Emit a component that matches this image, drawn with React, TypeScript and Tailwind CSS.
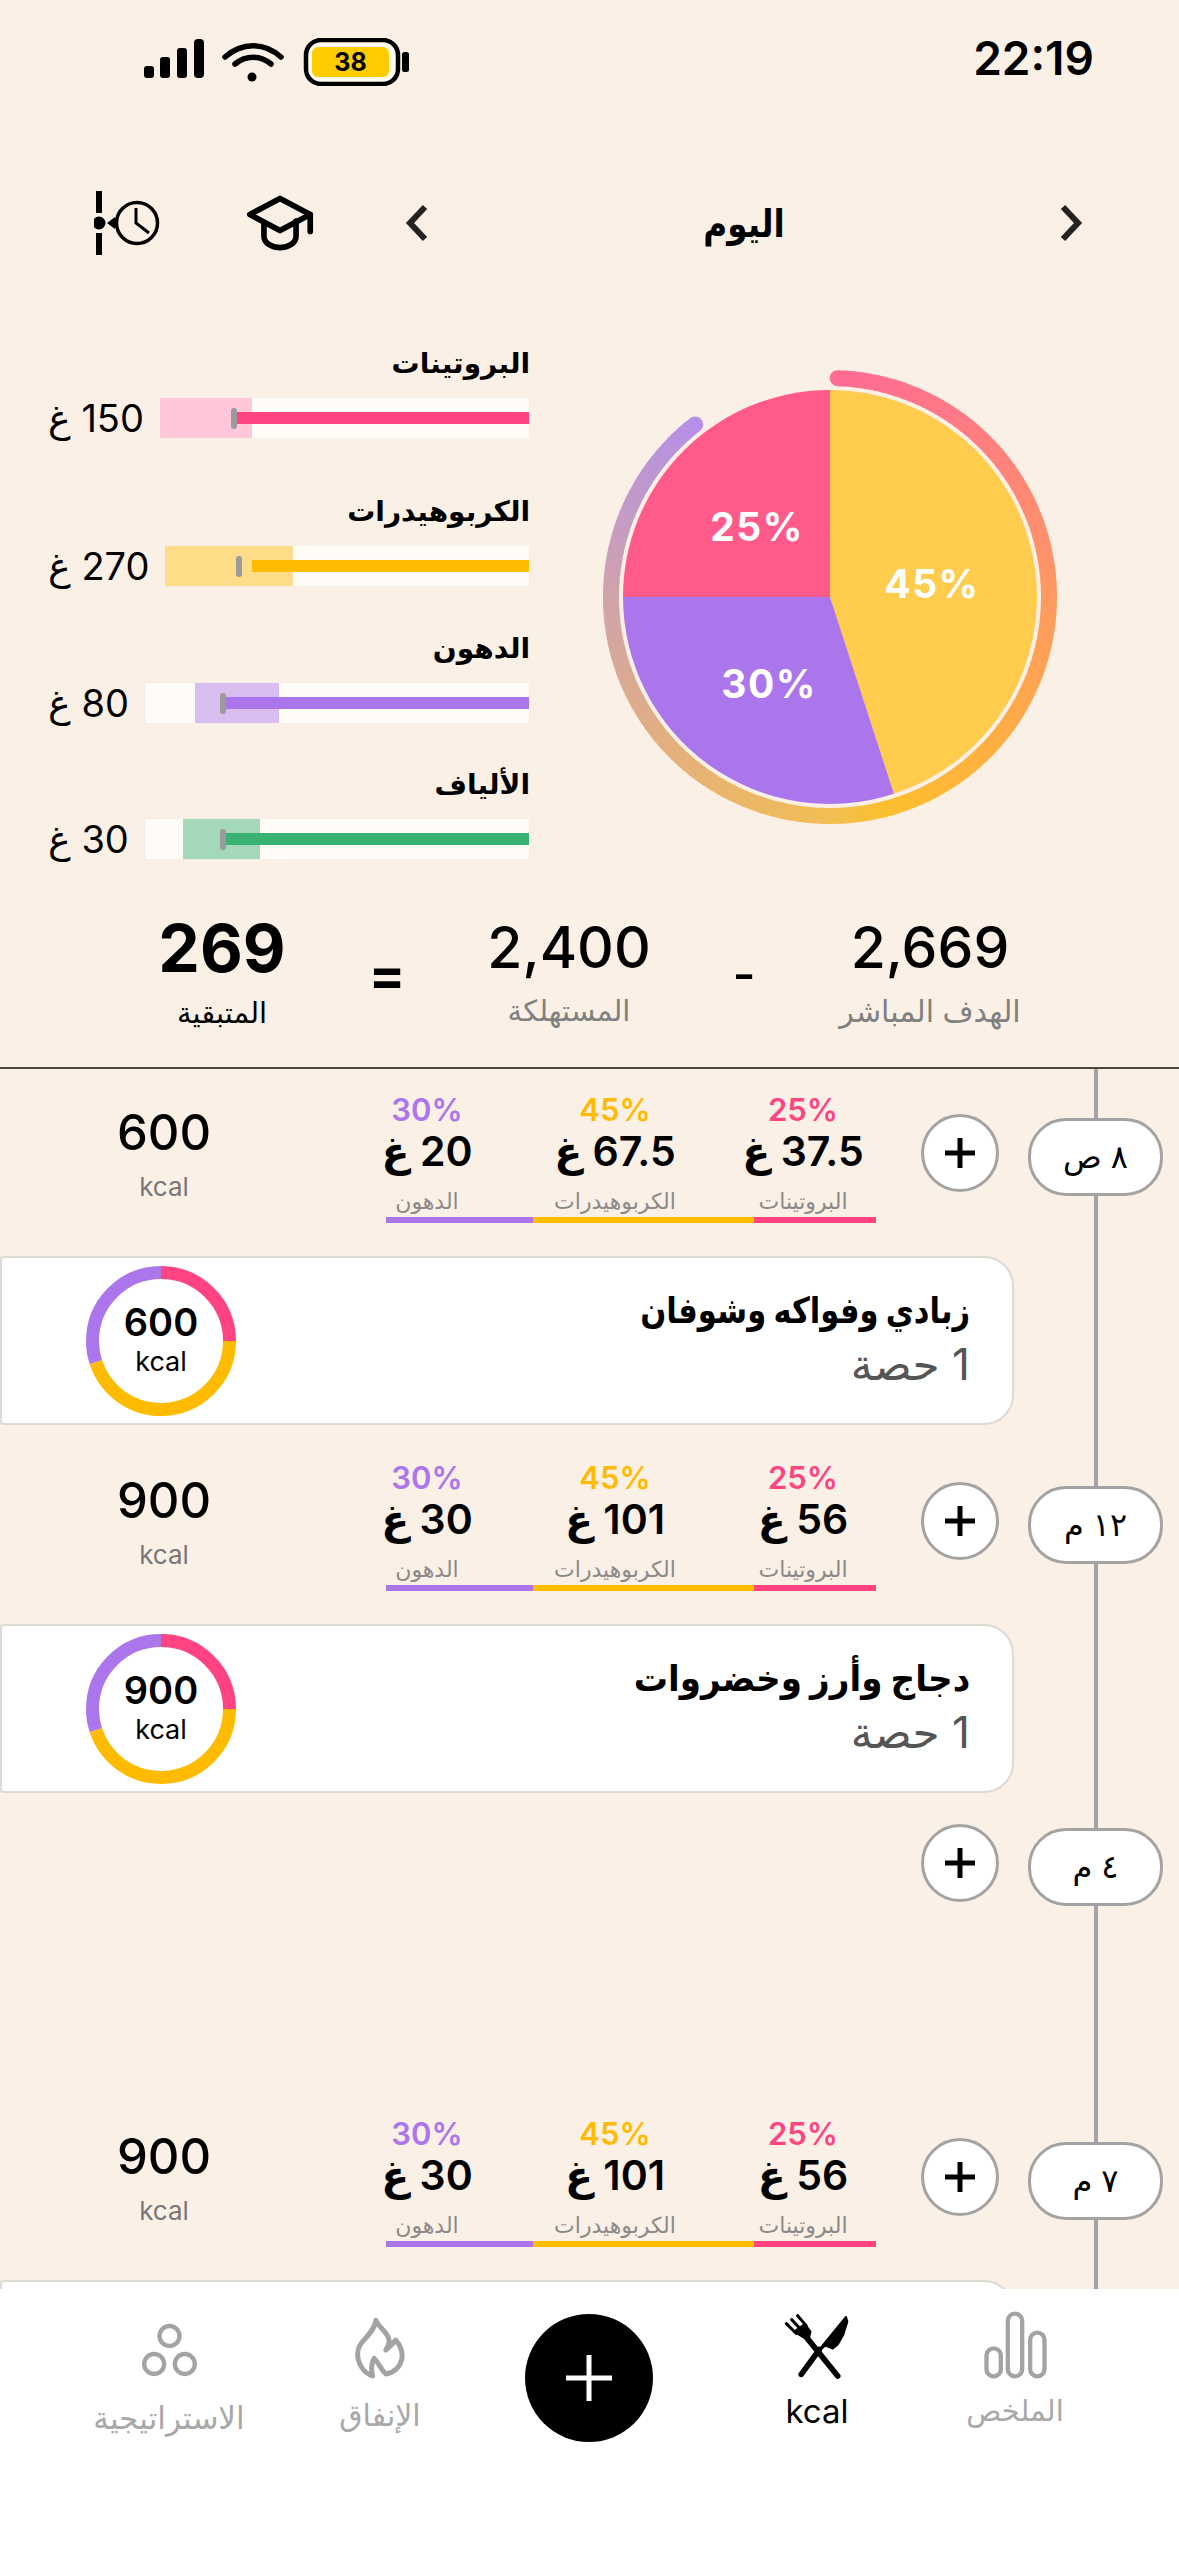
const PINK = "#FF4481";
const YELLOW = "#FFBB00";
const PURPLE = "#AB76EB";

const targets = [
  { name: "البروتينات", value: "150 غ", band: "#FFC7D8", fill: PINK, mt: "", bandLeft: 0, bandWidth: 92, fillLeft: 75, tick: 71 },
  { name: "الكربوهيدرات", value: "270 غ", band: "#FFDD88", fill: YELLOW, mt: "mt-[52px]", bandLeft: 0, bandWidth: 128, fillLeft: 87, tick: 71 },
  { name: "الدهون", value: "80 غ", band: "#D8BDF0", fill: PURPLE, mt: "mt-[41px]", bandLeft: 50, bandWidth: 84, fillLeft: 78, tick: 75 },
  { name: "الألياف", value: "30 غ", band: "#A3D9B9", fill: "#38B373", mt: "mt-[40px]", bandLeft: 38, bandWidth: 77, fillLeft: 78, tick: 75 },
];

// colours of the ring, clockwise from the top of the pie
const ringStops: [number, number[]][] = [
  [2, [255, 107, 147]],
  [45, [255, 127, 128]],
  [90, [255, 154, 96]],
  [135, [255, 176, 64]],
  [165, [252, 192, 46]],
  [180, [242, 190, 85]],
  [225, [228, 176, 124]],
  [270, [208, 163, 172]],
  [300, [191, 152, 208]],
  [322, [183, 143, 232]],
];

const ringColor = (angle: number) => {
  for (let i = 0; i < ringStops.length - 1; i++) {
    const [a, ca] = ringStops[i];
    const [b, cb] = ringStops[i + 1];
    if (angle <= b) {
      const t = (angle - a) / (b - a);
      return `rgb(${ca.map((c, k) => Math.round(c + (cb[k] - c) * t)).join(",")})`;
    }
  }
  return "rgb(183,143,232)";
};

const polar = (r: number, angle: number) => {
  const a = (angle * Math.PI) / 180;
  return [240 + r * Math.sin(a), 240 - r * Math.cos(a)];
};

const slice = (from: number, to: number) => {
  const [x1, y1] = polar(207, from);
  const [x2, y2] = polar(207, to);
  return `M240 240L${x1} ${y1}A207 207 0 0 1 ${x2} ${y2}Z`;
};

const MacroChart = () => {
  const segments = [];
  for (let a = 2; a < 322; a += 2) {
    const [x1, y1] = polar(219, a);
    const [x2, y2] = polar(219, a + 2.4);
    segments.push(
      <path key={a} d={`M${x1} ${y1}A219 219 0 0 1 ${x2} ${y2}`} stroke={ringColor(a)} strokeWidth="16" fill="none" />
    );
  }
  const [sx, sy] = polar(219, 2);
  const [ex, ey] = polar(219, 322);
  return (
    <svg width="480" height="480" viewBox="0 0 480 480" className="mt-[14px] shrink-0">
      {segments}
      <circle cx={sx} cy={sy} r="8" fill={ringColor(2)} />
      <circle cx={ex} cy={ey} r="8" fill={ringColor(322)} />
      <path d={slice(0, 162)} fill="#FFCC4D" />
      <path d={slice(162, 270)} fill="#AB76EB" />
      <path d={slice(270, 360)} fill="#FF5A8A" />
      <g fill="#fff" fontSize="39" fontWeight="700" textAnchor="middle" letterSpacing="1.5">
        <text x="342" y="241">45%</text>
        <text x="179" y="341">30%</text>
        <text x="167" y="184">25%</text>
      </g>
    </svg>
  );
};

const TargetRow = ({ t }: { t: (typeof targets)[number] }) => (
  <div className={t.mt}>
    <div className="h-[40px] text-[28px] leading-[40px] font-bold text-black">{t.name}</div>
    <div className="mt-[14px] flex items-center gap-[15px]">
      <div className="relative h-[42px] flex-1 border border-[#F3EEE8] bg-[#FFFCF7]">
        <div className="absolute inset-y-0" style={{ left: t.bandLeft, width: t.bandWidth, backgroundColor: t.band }} />
        <div className="absolute right-0 top-[14px] h-[12px]" style={{ left: t.fillLeft, backgroundColor: t.fill }} />
        <div className="absolute top-[10px] h-[21px] w-[6px] rounded-full bg-[#9B9B9B]" style={{ left: t.tick }} />
      </div>
      <div className="text-[38px] leading-[42px] text-black">{t.value}</div>
    </div>
  </div>
);

const Donut = ({ kcal }: { kcal: string }) => (
  <svg width="150" height="150" viewBox="0 0 150 150">
    <g fill="none" strokeWidth="13" transform="rotate(-90 75 75)">
      <circle cx="75" cy="75" r="68.5" pathLength="100" stroke={PINK} strokeDasharray="25 75" />
      <circle cx="75" cy="75" r="68.5" pathLength="100" stroke={YELLOW} strokeDasharray="45 55" strokeDashoffset="-25" />
      <circle cx="75" cy="75" r="68.5" pathLength="100" stroke={PURPLE} strokeDasharray="30 70" strokeDashoffset="-70" />
    </g>
    <text x="75" y="70" textAnchor="middle" fontSize="38" fontWeight="600" fill="#000">{kcal}</text>
    <text x="75" y="105" textAnchor="middle" fontSize="27" fill="#000">kcal</text>
  </svg>
);

const MealCard = ({ name, kcal, nameClass }: { name?: string; kcal: string; nameClass?: string }) => (
  <div className="mr-auto mt-[33px] flex h-[169px] w-[1014px] shrink-0 items-center justify-between rounded-l-[4px] rounded-r-[30px] border-2 border-[#DED9D2] bg-white pl-[84px] pr-[42px]">
    <div className="pb-[8px]">
      {name && <div className={`origin-right text-[36px] leading-[50px] font-bold text-black ${nameClass}`}>{name}</div>}
      {name && <div className="mt-[4px] text-[44px] leading-[50px] text-[#555555]">1 حصة</div>}
    </div>
    <Donut kcal={kcal} />
  </div>
);

const TimeSlot = ({ time }: { time: string }) => (
  <>
    <div className="relative z-10 mt-[26px] flex h-[78px] w-[135px] shrink-0 items-center justify-center rounded-[38px] border-[3px] border-[#A3A3A3] bg-white text-[32px] text-black">
      {time}
    </div>
    <button
      type="button"
      className="relative z-10 ml-[24px] mr-[29px] mt-[22px] flex h-[78px] w-[78px] shrink-0 items-center justify-center rounded-full border-[3px] border-[#A3A3A3] bg-white"
    >
      <svg width="34" height="34" viewBox="0 0 34 34">
        <path d="M17 2v30M2 17h30" stroke="#000" strokeWidth="5" />
      </svg>
    </button>
  </>
);

const MacroCol = ({ pct, value, label, color }: { pct: string; value: string; label: string; color: string }) => (
  <div className="flex w-[188px] flex-col items-center">
    <div className="text-[31px] leading-[36px] font-semibold" style={{ color }}>{pct}</div>
    <div className="-mt-[1px] text-[41px] leading-[48px] font-semibold text-black">{value}</div>
    <div className="mt-[13px] text-[22px] leading-[26px] text-[#8A8A8A]">{label}</div>
  </div>
);

const MealRow = ({ time, protein, carbs, fats, kcal, mt }: { time: string; protein: string; carbs: string; fats: string; kcal: string; mt: string }) => (
  <div className={`flex h-[131px] shrink-0 pr-[16px] ${mt}`}>
    <TimeSlot time={time} />
    <div className="w-[564px] shrink-0">
      <div className="flex">
        <MacroCol pct="25%" value={protein} label="البروتينات" color={PINK} />
        <MacroCol pct="45%" value={carbs} label="الكربوهيدرات" color={YELLOW} />
        <MacroCol pct="30%" value={fats} label="الدهون" color={PURPLE} />
      </div>
      <div className="ml-[53px] mr-[21px] mt-[3px] flex h-[6px]">
        <div className="w-[122px] bg-[#FF4481]" />
        <div className="w-[221px] bg-[#FFBB00]" />
        <div className="flex-1 bg-[#AB76EB]" />
      </div>
    </div>
    <div className="flex w-[333px] shrink-0 flex-col items-center pr-[5px] pt-[13px]">
      <div className="text-[49px] leading-[56px] font-medium text-black">{kcal}</div>
      <div className="mt-[11px] text-[26px] leading-[30px] text-[#777777]">kcal</div>
    </div>
  </div>
);

const HistoryIcon = () => (
  <svg width="66" height="65" viewBox="0 0 66 65" fill="none">
    <path d="M5 1v22M5 43v22" stroke="#000" strokeWidth="6" />
    <circle cx="5" cy="33" r="6.5" fill="#000" />
    <path d="M13 33l8-6v12z" fill="#000" />
    <circle cx="43" cy="33" r="20.5" stroke="#000" strokeWidth="3.5" />
    <path d="M42 18v15l13 10" stroke="#000" strokeWidth="3" />
  </svg>
);

const CapIcon = () => (
  <svg width="68" height="58" viewBox="0 0 72 60" fill="none" stroke="#000" strokeWidth="6" strokeLinecap="round" strokeLinejoin="round">
    <path d="M36 4L4 21l32 17 32-17z" />
    <path d="M68 21v18" />
    <path d="M19 30v14c0 7 8 12 17 12s17-5 17-12V28" />
  </svg>
);

const Chevron = ({ d }: { d: string }) => (
  <svg width="24" height="38" viewBox="0 0 24 38" fill="none" className="shrink-0">
    <path d={d} stroke="#222" strokeWidth="6" />
  </svg>
);

const ForkKnifeIcon = () => (
  <svg width="68" height="68" viewBox="40 40 205 205" fill="#000" stroke="#000" strokeLinecap="round" strokeLinejoin="round">
    <path d="M95 225L150 150" strokeWidth="17" fill="none" />
    <path d="M143 158L230 52 234 66 222 105 205 135 190 147 168 138z" strokeWidth="6" />
    <path d="M205 230L112 115" strokeWidth="17" fill="none" />
    <path d="M50 72L80 102M66 60L94 90M84 48L110 78" strokeWidth="9" fill="none" />
    <path d="M72 96L106 72 124 96 118 120 100 114z" strokeWidth="4" />
  </svg>
);

const navItems = [
  {
    label: "الملخص",
    active: false,
    box: "pt-[22px]",
    gap: "mt-[14px] text-[29px]",
    icon: (
      <svg width="63" height="68" viewBox="640 30 188 204" fill="none" stroke="#A3A3A3" strokeWidth="13">
        <rect x="647" y="142" width="43" height="84" rx="21.5" />
        <rect x="711" y="38" width="43" height="188" rx="21.5" />
        <rect x="778" y="95" width="43" height="131" rx="21.5" />
      </svg>
    ),
  },
  {
    label: "kcal",
    active: true,
    box: "pt-[24px]",
    gap: "mt-[12px] text-[33px]",
    icon: <ForkKnifeIcon />,
  },
  { plus: true, label: "", active: false, box: "", gap: "", icon: null },
  {
    label: "الإنفاق",
    active: false,
    box: "pt-[28px]",
    gap: "mt-[17px] text-[30px]",
    icon: (
      <svg width="52" height="63" viewBox="670 50 155 190" fill="none" stroke="#A3A3A3" strokeWidth="15" strokeLinejoin="round">
        <path d="M735 60c8 20 38 38 40 60 1 12-4 20-10 30 10-8 20-18 30-30 14 16 22 36 18 58-6 24-24 40-47 44-16-12-18-30-36-47-8 12-10 30-5 53-28-10-45-38-45-68 0-40 50-55 55-100z" />
      </svg>
    ),
  },
  {
    label: "الاستراتيجية",
    active: false,
    box: "pt-[33px]",
    gap: "mt-[22px] text-[31px]",
    icon: (
      <svg width="59" height="56" viewBox="30 58 176 168" fill="none" stroke="#A3A3A3" strokeWidth="13">
        <circle cx="118" cy="100" r="30" />
        <circle cx="72" cy="184" r="30" />
        <circle cx="164" cy="184" r="30" />
      </svg>
    ),
  },
];

const BottomNav = () => (
  <div className="absolute inset-x-0 bottom-0 z-20 h-[267px] bg-white">
    <div className="grid grid-cols-[166px_230px_226px_192px_230px] pr-[81px]">
      {navItems.map((item) =>
        item.plus ? (
          <div key="add" className="flex justify-center pt-[25px]">
            <button type="button" className="flex h-[128px] w-[128px] items-center justify-center rounded-full bg-black">
              <svg width="46" height="46" viewBox="0 0 46 46">
                <path d="M23 0v46M0 23h46" stroke="#fff" strokeWidth="5" />
              </svg>
            </button>
          </div>
        ) : (
          <div key={item.label} className={`flex flex-col items-center ${item.box}`}>
            {item.icon}
            <div className={`leading-[36px] ${item.gap} ${item.active ? "text-black" : "text-[#A8A8A8]"}`}>
              {item.label}
            </div>
          </div>
        )
      )}
    </div>
  </div>
);

export default function App() {
  return (
    <div
      dir="rtl"
      className="relative h-[2556px] w-[1179px] overflow-hidden bg-[#FAF0E6] font-['Inter','DejaVu_Sans',sans-serif]"
    >
      {/* Status bar */}
      <div dir="ltr" className="flex h-[190px] items-start justify-between pl-[144px] pr-[85px] pt-[38px]">
        <svg width="266" height="48" viewBox="0 0 266 48" className="shrink-0">
          <rect x="0" y="28" width="10" height="12" rx="3" fill="#000" />
          <rect x="16" y="19" width="10" height="21" rx="3" fill="#000" />
          <rect x="33" y="10" width="10" height="30" rx="3" fill="#000" />
          <rect x="50" y="1" width="10" height="39" rx="4" fill="#000" />
          <path d="M81 19c17-15 39-15 56 0" stroke="#000" strokeWidth="5.5" strokeLinecap="round" fill="none" />
          <path d="M91 26c11-9 25-9 36 0" stroke="#000" strokeWidth="5.5" strokeLinecap="round" fill="none" />
          <circle cx="108" cy="39" r="4.5" fill="#000" />
          <rect x="162" y="2" width="92" height="44" rx="15" fill="#FFF9EE" stroke="#000" strokeWidth="4.5" />
          <rect x="168" y="9" width="77" height="30" rx="6" fill="#FFCC00" />
          <text x="206.5" y="33" textAnchor="middle" fontSize="25" fontWeight="700" fill="#000">38</text>
          <rect x="258" y="14" width="7" height="20" rx="2.5" fill="#000" />
        </svg>
        <div className="text-[46px] leading-[40px] font-semibold text-black">22:19</div>
      </div>

      {/* Day header */}
      <div className="flex h-[65px] items-center pl-[94px] pr-[96px]">
        <Chevron d="M4 3l15 16L4 35" />
        <div className="flex-1 scale-x-[0.86] text-center text-[38px] leading-[50px] font-bold text-black">اليوم</div>
        <Chevron d="M20 3L5 19l15 16" />
        <div className="mr-[91px]">
          <CapIcon />
        </div>
        <div className="mr-[86px]">
          <HistoryIcon />
        </div>
      </div>

      {/* Macros and pie */}
      <div className="mt-[88px] flex gap-[60px] pl-[48px] pr-[109px]">
        <MacroChart />
        <div className="flex-1">
          {targets.map((t) => (
            <TargetRow key={t.name} t={t} />
          ))}
        </div>
      </div>

      {/* Calorie sum */}
      <div className="mt-[56px] grid grid-cols-[300px_72px_278px_86px_244px] pr-[99px] text-center">
        <div>
          <div className="text-[57px] leading-[64px] font-medium text-black">2,669</div>
          <div className="mt-[11px] text-[30px] leading-[40px] text-[#808080]">الهدف المباشر</div>
        </div>
        <div className="self-center text-[50px] font-medium text-black">-</div>
        <div>
          <div className="text-[57px] leading-[64px] font-medium text-black">2,400</div>
          <div className="mt-[11px] text-[29px] leading-[40px] text-[#808080]">المستهلكة</div>
        </div>
        <div className="self-center text-[54px] font-bold text-black">=</div>
        <div>
          <div className="text-[66px] leading-[64px] font-bold text-black">269</div>
          <div className="mt-[13px] text-[29px] leading-[40px] text-black">المتبقية</div>
        </div>
      </div>

      {/* Timeline */}
      <div className="relative mt-[34px] flex flex-col border-t-2 border-[#4A4540]">
        <div className="absolute right-[81px] top-0 h-[1500px] w-[4px] bg-[#A3A3A3]" />

        <MealRow mt="mt-[23px]" time="٨ ص" protein="37.5 غ" carbs="67.5 غ" fats="20 غ" kcal="600" />
        <MealCard name="زبادي وفواكه وشوفان" nameClass="scale-x-[0.85]" kcal="600" />

        <MealRow mt="mt-[35px]" time="١٢ م" protein="56 غ" carbs="101 غ" fats="30 غ" kcal="900" />
        <MealCard name="دجاج وأرز وخضروات" nameClass="scale-x-[0.95]" kcal="900" />

        <div className="mt-[9px] flex h-[314px] shrink-0 pr-[16px]">
          <TimeSlot time="٤ م" />
        </div>

        <MealRow mt="" time="٧ م" protein="56 غ" carbs="101 غ" fats="30 غ" kcal="900" />
        <MealCard kcal="900" />
      </div>

      <BottomNav />
    </div>
  );
}
